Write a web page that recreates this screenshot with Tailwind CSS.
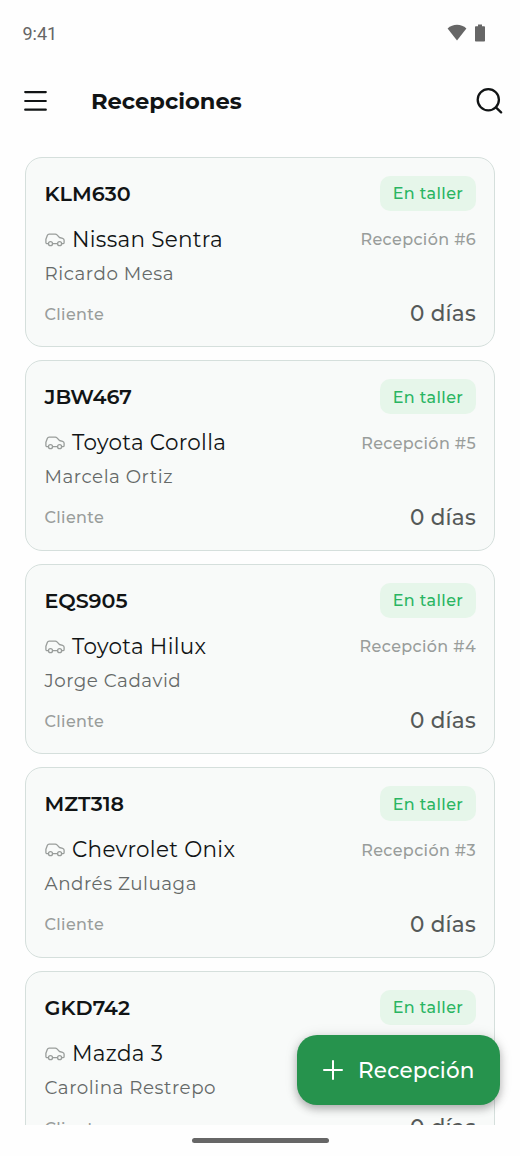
<!DOCTYPE html>
<html lang="es">
<head>
<meta charset="utf-8">
<title>Recepciones</title>
<script src="https://cdn.jsdelivr.net/npm/@tailwindcss/browser@4"></script>
</head>
<body class="bg-[#fefefe]">
<div class="relative flex h-[1156px] w-[520px] flex-col overflow-hidden bg-[#fefefe] font-[Montserrat,Inter,sans-serif] text-[#111415]">
  <div class="flex h-[66px] shrink-0 items-center justify-between pr-[34px] pl-[22.500px]">
    <span class="pt-px font-[Roboto,sans-serif] text-[18px] leading-6 whitespace-nowrap text-[#666]">9:41</span>
    <div class="flex items-center gap-[7px] pb-px">
      <svg class="h-[17px] w-[20px]" viewBox="0 0 20 17" fill="#666"><path d="M.6 4.6C5.8-.4 14.200-.4 19.400 4.600L10 16.600Z"/></svg>
      <svg class="h-[18px] w-[12px]" viewBox="0 0 12 18" fill="#666"><path d="M4 .6h4v1.700h2.200a.8.8 0 0 1 .8.8v13.600a.8.8 0 0 1-.8.8H1.800a.8.8 0 0 1-.8-.8V3.100a.8.8 0 0 1 .8-.8H4z"/></svg>
    </div>
  </div>
  <header class="flex h-[70px] shrink-0 items-center pr-[17px] pl-[24px]">
    <svg class="h-[22px] w-[23px]" viewBox="0 0 23 22" fill="none" stroke="#111415" stroke-width="2.200" stroke-linecap="round"><path d="M1.200 2.100h20.600M1.200 11h20.600M1.200 19.700h20.600"/></svg>
    <h1 class="ml-[44px] flex-1 text-[22.600px] leading-8 font-bold">Recepciones</h1>
    <svg class="h-[26px] w-[27px]" viewBox="0 0 27 26" fill="none" stroke="#111415" stroke-width="2.300" stroke-linecap="round"><circle cx="12.300" cy="11.800" r="10.600"/><path d="m19.900 19.400 5.200 5"/></svg>
  </header>
  <main id="list" class="flex h-[989px] shrink-0 flex-col gap-[13px] overflow-hidden pr-[25.500px] pl-[25px] pt-[20.500px]"></main>
  <div class="flex flex-1 justify-center pt-[13px]"><div class="h-[5px] w-[137px] rounded-full bg-[#666]"></div></div>
  <button class="absolute top-[1035px] left-[297px] flex h-[70px] w-[203px] items-center rounded-[20px] bg-[#26934d] pl-[26px] text-white shadow-[0_4px_8px_rgba(0,0,0,0.26),0_1px_14px_rgba(0,0,0,0.10)]">
    <svg class="h-[20px] w-[20px]" viewBox="0 0 20 20" fill="none" stroke="white" stroke-width="2" stroke-linecap="round"><path d="M10 1v18M1 10h18"/></svg>
    <span class="ml-[15px] text-[21.500px] font-medium tracking-[0.170px] whitespace-nowrap">Recepción</span>
  </button>
</div>
<script>
const rows = [
  ["KLM630", "Nissan Sentra", "Ricardo Mesa", "Recepción #6"],
  ["JBW467", "Toyota Corolla", "Marcela Ortiz", "Recepción #5"],
  ["EQS905", "Toyota Hilux", "Jorge Cadavid", "Recepción #4"],
  ["MZT318", "Chevrolet Onix", "Andrés Zuluaga", "Recepción #3"],
  ["GKD742", "Mazda 3", "Carolina Restrepo", "Recepción #2"],
];
document.getElementById("list").innerHTML = rows.map(r => `
<article class="flex h-[190.500px] shrink-0 flex-col rounded-[17px] border border-[#d5dfdc] bg-[#f8faf9] pr-[17.500px] pl-[18.500px] pt-[18px]">
  <div class="flex h-[35px] items-center justify-between">
    <span class="pt-px text-[20.700px] font-semibold whitespace-nowrap">${r[0]}</span>
    <span class="flex h-[35px] w-[96px] items-center justify-center rounded-[10px] bg-[#e6f6ea] pt-[2px] text-[16px] font-[550] tracking-[0.400px] whitespace-nowrap text-[#2ab562]">En taller</span>
  </div>
  <div class="mt-[13px] flex h-[30px] items-center">
    <svg class="mt-[2px] h-[14px] w-[20px] shrink-0" viewBox="0 0 20 14" fill="none" stroke="#999d9b" stroke-width="1.300" stroke-linejoin="round"><path d="M3.400 10.700H2.100a1.200 1.200 0 0 1-1.200-1.200V6.200L2.300 2.500Q2.800 1.200 4.200 1.200H10.300Q11.300 1.200 12 1.900L14.500 4.500 17.600 5.300Q19.100 5.700 19.100 7.200V9.500A1.200 1.200 0 0 1 17.900 10.700H16.700M12.500 10.700H7.600"/><circle cx="5.500" cy="10.700" r="2"/><circle cx="14.600" cy="10.700" r="2"/></svg>
    <span class="ml-[7.500px] pt-px text-[21.500px] font-[430] tracking-[0.300px] whitespace-nowrap">${r[1]}</span>
    <span class="ml-auto pt-[3px] text-[16px] font-[530] tracking-[0.370px] whitespace-nowrap text-[#999d9b]">${r[3]}</span>
  </div>
  <div class="mt-[8px] flex h-[24px] items-center text-[18.300px] font-[420] tracking-[0.530px] whitespace-nowrap text-[#656968]">${r[2]}</div>
  <div class="mt-[14px] flex h-[28px] items-center justify-between">
    <span class="pt-[2px] text-[16px] font-[530] tracking-[0.370px] whitespace-nowrap text-[#999d9b]">Cliente</span>
    <span class="text-[21.500px] font-[550] tracking-[0.250px] whitespace-nowrap text-[#555958]">0 días</span>
  </div>
</article>`).join("");
</script>
</body>
</html>
